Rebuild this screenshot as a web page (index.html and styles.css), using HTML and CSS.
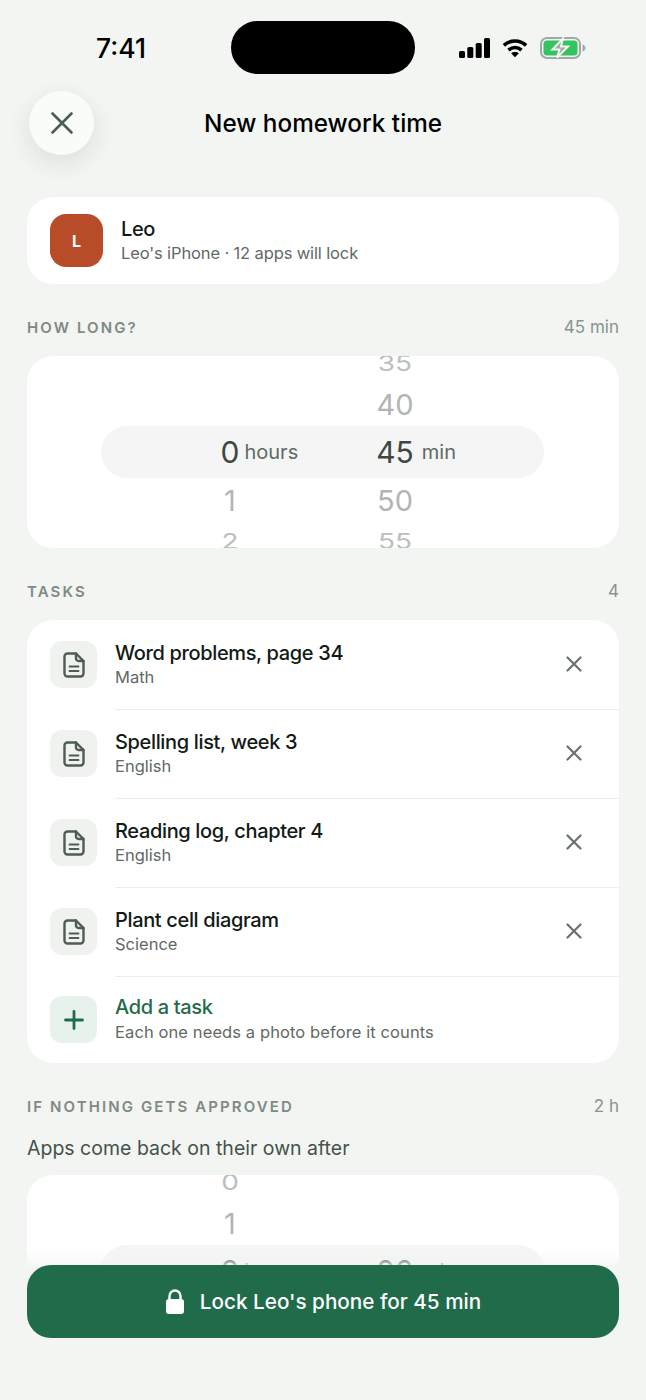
FILE: index.html
```html
<!DOCTYPE html>
<html lang="en">
<head>
    <meta charset="UTF-8">
    <meta name="viewport" content="width=device-width, initial-scale=1.0">
    <title>New homework time</title>
    <link rel="stylesheet" href="styles.css">
</head>
<body>
    <div class="screen">
        <div class="status-bar">
            <span class="clock">7:41</span>
            <div class="island"></div>
            <div class="status-icons">
                <svg width="31" height="20" viewBox="0 0 31 20" fill="#000">
                    <rect x="0" y="13" width="6" height="7" rx="1.5"/>
                    <rect x="8.300" y="9" width="6" height="11" rx="1.5"/>
                    <rect x="16.700" y="5" width="6" height="15" rx="1.5"/>
                    <rect x="25" y="0" width="6" height="20" rx="1.5"/>
                </svg>
                <svg width="26" height="20" viewBox="0 0 28 21" fill="none" stroke="#000" stroke-width="3.800">
                    <path d="M2 7.600C9 1.400 19 1.400 26 7.600"/>
                    <path d="M7 12.800C11 9 17 9 21 12.800"/>
                    <path d="M14 20.500L9.800 16.200C12 14.200 16 14.200 18.200 16.200Z" fill="#000" stroke="none"/>
                </svg>
                <svg width="46" height="22" viewBox="0 0 46 22">
                    <rect x="1" y="1" width="39" height="20" rx="6" fill="none" stroke="#a3a8a4" stroke-width="2"/>
                    <rect x="3.500" y="3.500" width="34" height="15" rx="3.500" fill="#34c361"/>
                    <path d="M42.500 7.500c2 .6 3 2 3 3.500s-1 2.900-3 3.500z" fill="#a3a8a4"/>
                    <path d="M23 1.500L12.500 12.500H19.500L17 20.500L28 9.500H21Z" fill="#a3a8a4" stroke="#f2f5f2" stroke-width="2"/>
                </svg>
            </div>
        </div>

        <div class="nav">
            <button class="close-btn">
                <svg width="24" height="24" viewBox="0 0 24 24" fill="none" stroke="#4d5c54" stroke-width="2.600" stroke-linecap="round">
                    <path d="M2.500 2.500L21.500 21.500M21.500 2.500L2.500 21.500"/>
                </svg>
            </button>
            <h1 class="nav-title">New homework time</h1>
        </div>

        <div class="card child-card">
            <div class="avatar">L</div>
            <div class="row-text">
                <div class="row-title">Leo</div>
                <div class="row-sub child-sub">Leo's iPhone · 12 apps will lock</div>
            </div>
        </div>

        <div class="section-head">
            <span class="section-label">HOW LONG?</span>
            <span class="section-value">45 min</span>
        </div>
        <div class="card wheel">
            <div class="wheel-band"></div>
            <div class="wheel-col">
                <div class="wheel-item far"></div>
                <div class="wheel-item near"></div>
                <div class="wheel-item picked"><span></span><b>0</b><span class="unit unit-hours">hours</span></div>
                <div class="wheel-item near"><span></span><b>1</b><span></span></div>
                <div class="wheel-item far"><span></span><b>2</b><span></span></div>
            </div>
            <div class="wheel-col">
                <div class="wheel-item far"><span></span><b>35</b><span></span></div>
                <div class="wheel-item near"><span></span><b>40</b><span></span></div>
                <div class="wheel-item picked"><span></span><b>45</b><span class="unit">min</span></div>
                <div class="wheel-item near"><span></span><b>50</b><span></span></div>
                <div class="wheel-item far"><span></span><b>55</b><span></span></div>
            </div>
        </div>

        <div class="section-head">
            <span class="section-label">TASKS</span>
            <span class="section-value">4</span>
        </div>
        <div class="card task-list">
            <div class="task">
                <div class="task-icon">
                    <svg width="22" height="26" viewBox="0 0 22 26" fill="none" stroke="#4d5c54" stroke-width="2.400" stroke-linejoin="round" stroke-linecap="round">
                        <path d="M4.500 1.500H13L20.500 9V21.500A3 3 0 0 1 17.500 24.500H4.500A3 3 0 0 1 1.500 21.500V4.500A3 3 0 0 1 4.500 1.500Z"/>
                        <path d="M13 1.500V6.500A2.500 2.500 0 0 0 15.500 9H20.500"/>
                        <path d="M6.500 14.500H15.500M6.500 19H15.500" stroke-width="1.800"/>
                    </svg>
                </div>
                <div class="row-text">
                    <div class="row-title">Word problems, page 34</div>
                    <div class="row-sub">Math</div>
                </div>
                <svg class="task-x" width="16" height="16" viewBox="0 0 16 16" fill="none" stroke="#68736d" stroke-width="2.200" stroke-linecap="round">
                    <path d="M1.500 1.500L14.500 14.500M14.500 1.500L1.500 14.500"/>
                </svg>
            </div>
            <div class="task">
                <div class="task-icon">
                    <svg width="22" height="26" viewBox="0 0 22 26" fill="none" stroke="#4d5c54" stroke-width="2.400" stroke-linejoin="round" stroke-linecap="round">
                        <path d="M4.500 1.500H13L20.500 9V21.500A3 3 0 0 1 17.500 24.500H4.500A3 3 0 0 1 1.500 21.500V4.500A3 3 0 0 1 4.500 1.500Z"/>
                        <path d="M13 1.500V6.500A2.500 2.500 0 0 0 15.500 9H20.500"/>
                        <path d="M6.500 14.500H15.500M6.500 19H15.500" stroke-width="1.800"/>
                    </svg>
                </div>
                <div class="row-text">
                    <div class="row-title">Spelling list, week 3</div>
                    <div class="row-sub">English</div>
                </div>
                <svg class="task-x" width="16" height="16" viewBox="0 0 16 16" fill="none" stroke="#68736d" stroke-width="2.200" stroke-linecap="round">
                    <path d="M1.500 1.500L14.500 14.500M14.500 1.500L1.500 14.500"/>
                </svg>
            </div>
            <div class="task">
                <div class="task-icon">
                    <svg width="22" height="26" viewBox="0 0 22 26" fill="none" stroke="#4d5c54" stroke-width="2.400" stroke-linejoin="round" stroke-linecap="round">
                        <path d="M4.500 1.500H13L20.500 9V21.500A3 3 0 0 1 17.500 24.500H4.500A3 3 0 0 1 1.500 21.500V4.500A3 3 0 0 1 4.500 1.500Z"/>
                        <path d="M13 1.500V6.500A2.500 2.500 0 0 0 15.500 9H20.500"/>
                        <path d="M6.500 14.500H15.500M6.500 19H15.500" stroke-width="1.800"/>
                    </svg>
                </div>
                <div class="row-text">
                    <div class="row-title">Reading log, chapter 4</div>
                    <div class="row-sub">English</div>
                </div>
                <svg class="task-x" width="16" height="16" viewBox="0 0 16 16" fill="none" stroke="#68736d" stroke-width="2.200" stroke-linecap="round">
                    <path d="M1.500 1.500L14.500 14.500M14.500 1.500L1.500 14.500"/>
                </svg>
            </div>
            <div class="task">
                <div class="task-icon">
                    <svg width="22" height="26" viewBox="0 0 22 26" fill="none" stroke="#4d5c54" stroke-width="2.400" stroke-linejoin="round" stroke-linecap="round">
                        <path d="M4.500 1.500H13L20.500 9V21.500A3 3 0 0 1 17.500 24.500H4.500A3 3 0 0 1 1.500 21.500V4.500A3 3 0 0 1 4.500 1.500Z"/>
                        <path d="M13 1.500V6.500A2.500 2.500 0 0 0 15.500 9H20.500"/>
                        <path d="M6.500 14.500H15.500M6.500 19H15.500" stroke-width="1.800"/>
                    </svg>
                </div>
                <div class="row-text">
                    <div class="row-title">Plant cell diagram</div>
                    <div class="row-sub">Science</div>
                </div>
                <svg class="task-x" width="16" height="16" viewBox="0 0 16 16" fill="none" stroke="#68736d" stroke-width="2.200" stroke-linecap="round">
                    <path d="M1.500 1.500L14.500 14.500M14.500 1.500L1.500 14.500"/>
                </svg>
            </div>
            <div class="task add-task">
                <div class="task-icon add-icon">
                    <svg width="20" height="20" viewBox="0 0 20 20" fill="none" stroke="#1f6b4a" stroke-width="2.800" stroke-linecap="round">
                        <path d="M10 1.500V18.500M1.500 10H18.500"/>
                    </svg>
                </div>
                <div class="row-text">
                    <div class="row-title add-title">Add a task</div>
                    <div class="row-sub add-sub">Each one needs a photo before it counts</div>
                </div>
            </div>
        </div>

        <div class="section-head">
            <span class="section-label">IF NOTHING GETS APPROVED</span>
            <span class="section-value">2 h</span>
        </div>
        <p class="section-note">Apps come back on their own after</p>
        <div class="card wheel wheel-low">
            <div class="wheel-band"></div>
            <div class="wheel-col">
                <div class="wheel-item far"><span></span><b>0</b><span></span></div>
                <div class="wheel-item near"><span></span><b>1</b><span></span></div>
                <div class="wheel-item picked"><span></span><b>2</b><span class="unit unit-hours">hours</span></div>
            </div>
            <div class="wheel-col">
                <div class="wheel-item far"></div>
                <div class="wheel-item near"></div>
                <div class="wheel-item picked"><span></span><b>00</b><span class="unit">min</span></div>
            </div>
        </div>

        <div class="footer">
            <button class="lock-btn">
                <svg width="20" height="25" viewBox="0 0 20 25">
                    <path d="M4.500 11V7a5.500 5.500 0 0 1 11 0V11" fill="none" stroke="#fff" stroke-width="2.400"/>
                    <rect x="1" y="10" width="18" height="15" rx="3" fill="#fff"/>
                </svg>
                Lock Leo's phone for 45 min
            </button>
        </div>
    </div>
</body>
</html>
```

FILE: styles.css
```css
* {
    box-sizing: border-box;
}
html, body {
    margin: 0;
    padding: 0;
}
body {
    background-color: #f2f5f2;
    font-family: 'Inter', 'Noto Sans', sans-serif;
    color: #111a15;
}
.screen {
    position: relative;
    width: 646px;
    height: 1400px;
    overflow: hidden;
    padding: 21px 27px 0;
}

/* status bar */
.status-bar {
    height: 53px;
    display: grid;
    grid-template-columns: 1fr auto 1fr;
    align-items: center;
}
.clock {
    margin-left: 69px;
    font-size: 26.500px;
    font-weight: 500;
    color: #000;
}
.island {
    width: 184px;
    height: 53px;
    border-radius: 27px;
    background-color: #000;
}
.status-icons {
    margin-right: 33px;
    display: flex;
    align-items: center;
    justify-content: flex-end;
    gap: 12px;
}

/* top nav */
.nav {
    height: 64px;
    margin-top: 17px;
    display: flex;
    align-items: center;
    padding-left: 2px;
}
.close-btn {
    width: 65px;
    height: 64px;
    flex-shrink: 0;
    padding: 0;
    border: none;
    border-radius: 50%;
    background-color: #f9fcf9;
    box-shadow: 0 8px 24px rgba(30, 50, 40, 0.1);
    display: flex;
    align-items: center;
    justify-content: center;
}
.nav-title {
    margin: 0;
    padding-left: 110px;
    font-size: 24.300px;
    font-weight: 500;
    color: #000;
}

/* cards */
.card {
    background-color: #fff;
    border-radius: 26px;
}
.child-card {
    height: 87px;
    margin-top: 42px;
    padding: 0 23px;
    display: flex;
    align-items: center;
    gap: 18px;
}
.avatar {
    width: 53px;
    height: 53px;
    border-radius: 16px;
    background-color: #b84c28;
    color: #fff;
    font-size: 16px;
    font-weight: 700;
    display: flex;
    align-items: center;
    justify-content: center;
}
.row-text {
    padding-bottom: 2px;
}
.row-title {
    font-size: 20px;
    font-weight: 500;
    line-height: 26px;
    letter-spacing: -0.350px;
}
.row-sub {
    font-size: 16.500px;
    line-height: 22px;
    color: #5f6a64;
}
.child-sub {
    letter-spacing: -0.130px;
}
.add-sub {
    margin-top: 1px;
    letter-spacing: 0.100px;
}

/* section headings */
.section-head {
    height: 20px;
    margin-top: 33px;
    display: flex;
    align-items: center;
    justify-content: space-between;
}
.section-label {
    font-size: 15px;
    font-weight: 600;
    letter-spacing: 2.100px;
    color: #7f8a84;
}
.section-value {
    font-size: 17px;
    color: #8a938d;
}
.section-note {
    margin: 19px 0 0;
    font-size: 19.500px;
    line-height: 26px;
    color: #46514b;
}

/* wheel pickers */
.wheel {
    position: relative;
    height: 192px;
    margin-top: 19px;
    overflow: hidden;
    display: flex;
    justify-content: center;
    padding-right: 21px;
}
.wheel-band {
    position: absolute;
    left: 74px;
    right: 75px;
    top: 70px;
    height: 52px;
    border-radius: 26px;
    background-color: #f4f5f4;
}
.wheel-col {
    position: relative;
    width: 165px;
    display: flex;
    flex-direction: column;
    margin-top: -12px;
}
.wheel-item {
    flex-shrink: 0;
    display: grid;
    grid-template-columns: 1fr auto 1fr;
    align-items: center;
    column-gap: 8px;
    color: #b3b5b4;
    font-size: 29px;
}
.wheel-item b {
    font-weight: 400;
}
.wheel-item.far {
    height: 38px;
    font-size: 28px;
    color: #bcbebd;
    transform: scaleY(0.78);
}
.wheel-item.near {
    height: 44px;
}
.wheel-item.picked {
    height: 52px;
    color: #3f4743;
    font-size: 30px;
}
.unit {
    font-size: 20px;
    color: #5f6a64;
}
.unit-hours {
    margin-left: -3px;
}
.wheel-low {
    margin-top: 14px;
}

/* task rows */
.task-list {
    margin-top: 19px;
    overflow: hidden;
}
.task {
    height: 89px;
    display: flex;
    align-items: center;
    padding-left: 23px;
    position: relative;
}
.task + .task::before {
    content: "";
    position: absolute;
    left: 88px;
    right: 0;
    top: 0;
    height: 1px;
    background-color: #eceeec;
}
.add-task {
    height: 87px;
}
.task-icon {
    width: 47px;
    height: 47px;
    flex-shrink: 0;
    margin-right: 18px;
    border-radius: 12px;
    background-color: #f0f2f0;
    display: flex;
    align-items: center;
    justify-content: center;
}
.add-icon {
    background-color: #e8f2ec;
}
.add-title {
    color: #1f6b4a;
}
.task-x {
    margin-left: auto;
    margin-right: 37px;
    margin-bottom: 2px;
}

/* bottom button */
.footer {
    position: absolute;
    left: 0;
    right: 0;
    bottom: 0;
    height: 150px;
    padding: 15px 27px 0;
    background: linear-gradient(to bottom, rgba(242, 245, 242, 0) 0, rgba(242, 245, 242, 0.7) 15px, #f2f5f2 16px);
}
.lock-btn {
    width: 100%;
    height: 73px;
    border: none;
    border-radius: 24px;
    background-color: #206b4a;
    color: #fff;
    font-family: inherit;
    font-size: 20.700px;
    font-weight: 500;
    display: flex;
    align-items: center;
    justify-content: center;
    gap: 15px;
}
```
